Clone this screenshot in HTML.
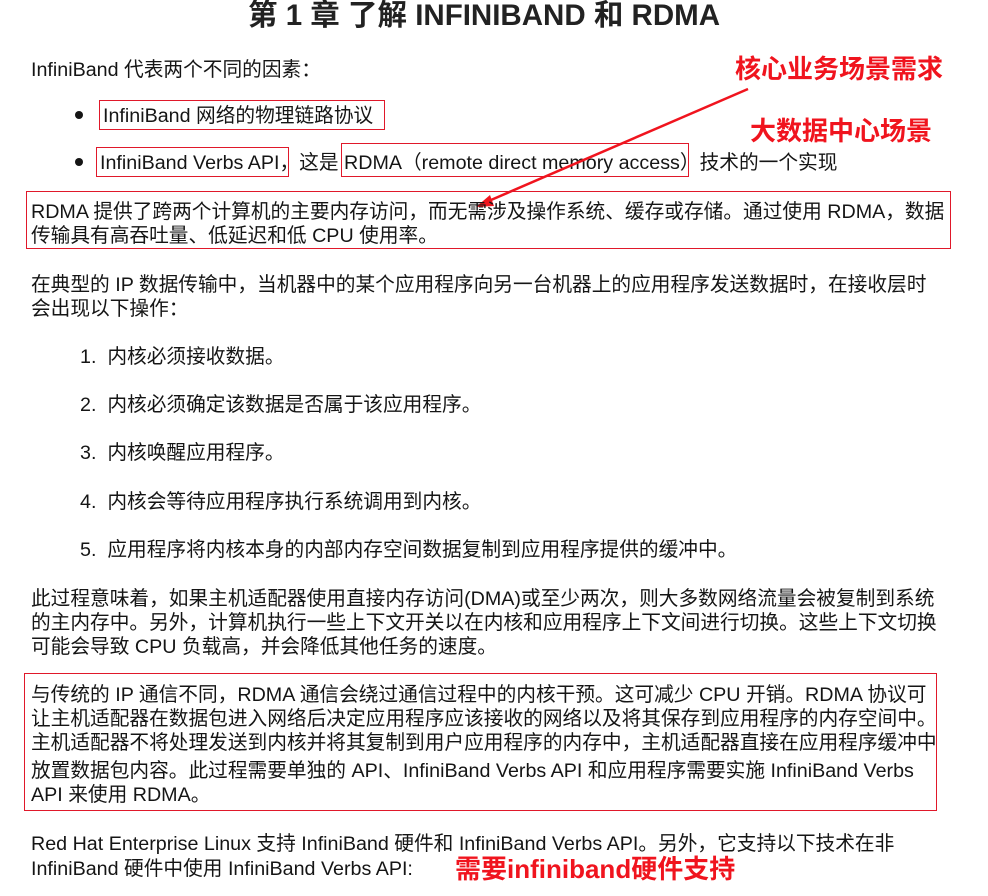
<!DOCTYPE html>
<html><head><meta charset="utf-8"><style>
body{margin:0;width:988px;height:896px;background:#fff;position:relative;overflow:hidden;font-family:"Liberation Sans","Noto Sans CJK SC",sans-serif;color:#151515}
.t{position:absolute;white-space:nowrap;font-size:19.7px;line-height:24px;letter-spacing:0}
.b{position:absolute;border:1.5px solid #e0182a}
.r{position:absolute;white-space:nowrap;color:#f0141e;font-weight:bold;font-size:26px;line-height:30px}
.dot{position:absolute;width:8px;height:8px;border-radius:50%;background:#151515}
</style></head><body>
<div class="t" style="left:248px;top:0px;font-size:29.5px;line-height:32px;font-weight:bold;color:#222">第 1 章 了解 INFINIBAND 和 RDMA</div>
<div class="t" style="left:31px;top:58px">InfiniBand 代表两个不同的因素：</div>
<div class="dot" style="left:75px;top:111px"></div>
<div class="t" style="left:103px;top:104px">InfiniBand 网络的物理链路协议</div>
<div class="b" style="left:99px;top:100px;width:284px;height:28px"></div>
<div class="dot" style="left:75px;top:158px"></div>
<div class="t" style="left:100px;top:151px">InfiniBand Verbs API，这是 RDMA（remote direct memory access）技术的一个实现</div>
<div class="b" style="left:96px;top:147px;width:191px;height:28px"></div>
<div class="b" style="left:341px;top:143px;width:346px;height:32px"></div>
<div class="r" style="left:735px;top:54px">核心业务场景需求</div>
<div class="r" style="left:750px;top:116px">大数据中心场景</div>
<svg style="position:absolute;left:0;top:0" width="988" height="896"><line x1="748" y1="89" x2="484" y2="203" stroke="#f0141e" stroke-width="2.5"/><polygon points="476,207 490,195 494,206" fill="#f0141e"/></svg>
<div class="b" style="left:26px;top:191px;width:923px;height:56px"></div>
<div class="t" style="left:31px;top:200px">RDMA 提供了跨两个计算机的主要内存访问，而无需涉及操作系统、缓存或存储。通过使用 RDMA，数据</div>
<div class="t" style="left:31px;top:224px">传输具有高吞吐量、低延迟和低 CPU 使用率。</div>
<div class="t" style="left:31px;top:273px">在典型的 IP 数据传输中，当机器中的某个应用程序向另一台机器上的应用程序发送数据时，在接收层时</div>
<div class="t" style="left:31px;top:297px">会出现以下操作：</div>
<div class="t" style="left:80px;top:345px">1.&nbsp;&nbsp;内核必须接收数据。</div>
<div class="t" style="left:80px;top:393px">2.&nbsp;&nbsp;内核必须确定该数据是否属于该应用程序。</div>
<div class="t" style="left:80px;top:441px">3.&nbsp;&nbsp;内核唤醒应用程序。</div>
<div class="t" style="left:80px;top:490px">4.&nbsp;&nbsp;内核会等待应用程序执行系统调用到内核。</div>
<div class="t" style="left:80px;top:538px">5.&nbsp;&nbsp;应用程序将内核本身的内部内存空间数据复制到应用程序提供的缓冲中。</div>
<div class="t" style="left:31px;top:587px">此过程意味着，如果主机适配器使用直接内存访问(DMA)或至少两次，则大多数网络流量会被复制到系统</div>
<div class="t" style="left:31px;top:611px">的主内存中。另外，计算机执行一些上下文开关以在内核和应用程序上下文间进行切换。这些上下文切换</div>
<div class="t" style="left:31px;top:635px">可能会导致 CPU 负载高，并会降低其他任务的速度。</div>
<div class="b" style="left:24px;top:673px;width:911px;height:136px"></div>
<div class="t" style="left:31px;top:683px">与传统的 IP 通信不同，RDMA 通信会绕过通信过程中的内核干预。这可减少 CPU 开销。RDMA 协议可</div>
<div class="t" style="left:31px;top:707px">让主机适配器在数据包进入网络后决定应用程序应该接收的网络以及将其保存到应用程序的内存空间中。</div>
<div class="t" style="left:31px;top:731px">主机适配器不将处理发送到内核并将其复制到用户应用程序的内存中，主机适配器直接在应用程序缓冲中</div>
<div class="t" style="left:31px;top:759px">放置数据包内容。此过程需要单独的 API、InfiniBand Verbs API 和应用程序需要实施 InfiniBand Verbs</div>
<div class="t" style="left:31px;top:783px">API 来使用 RDMA。</div>
<div class="t" style="left:31px;top:832px">Red Hat Enterprise Linux 支持 InfiniBand 硬件和 InfiniBand Verbs API。另外，它支持以下技术在非</div>
<div class="t" style="left:31px;top:857px">InfiniBand 硬件中使用 InfiniBand Verbs API:</div>
<div class="r" style="left:455px;top:854px">需要infiniband硬件支持</div>
</body></html>
